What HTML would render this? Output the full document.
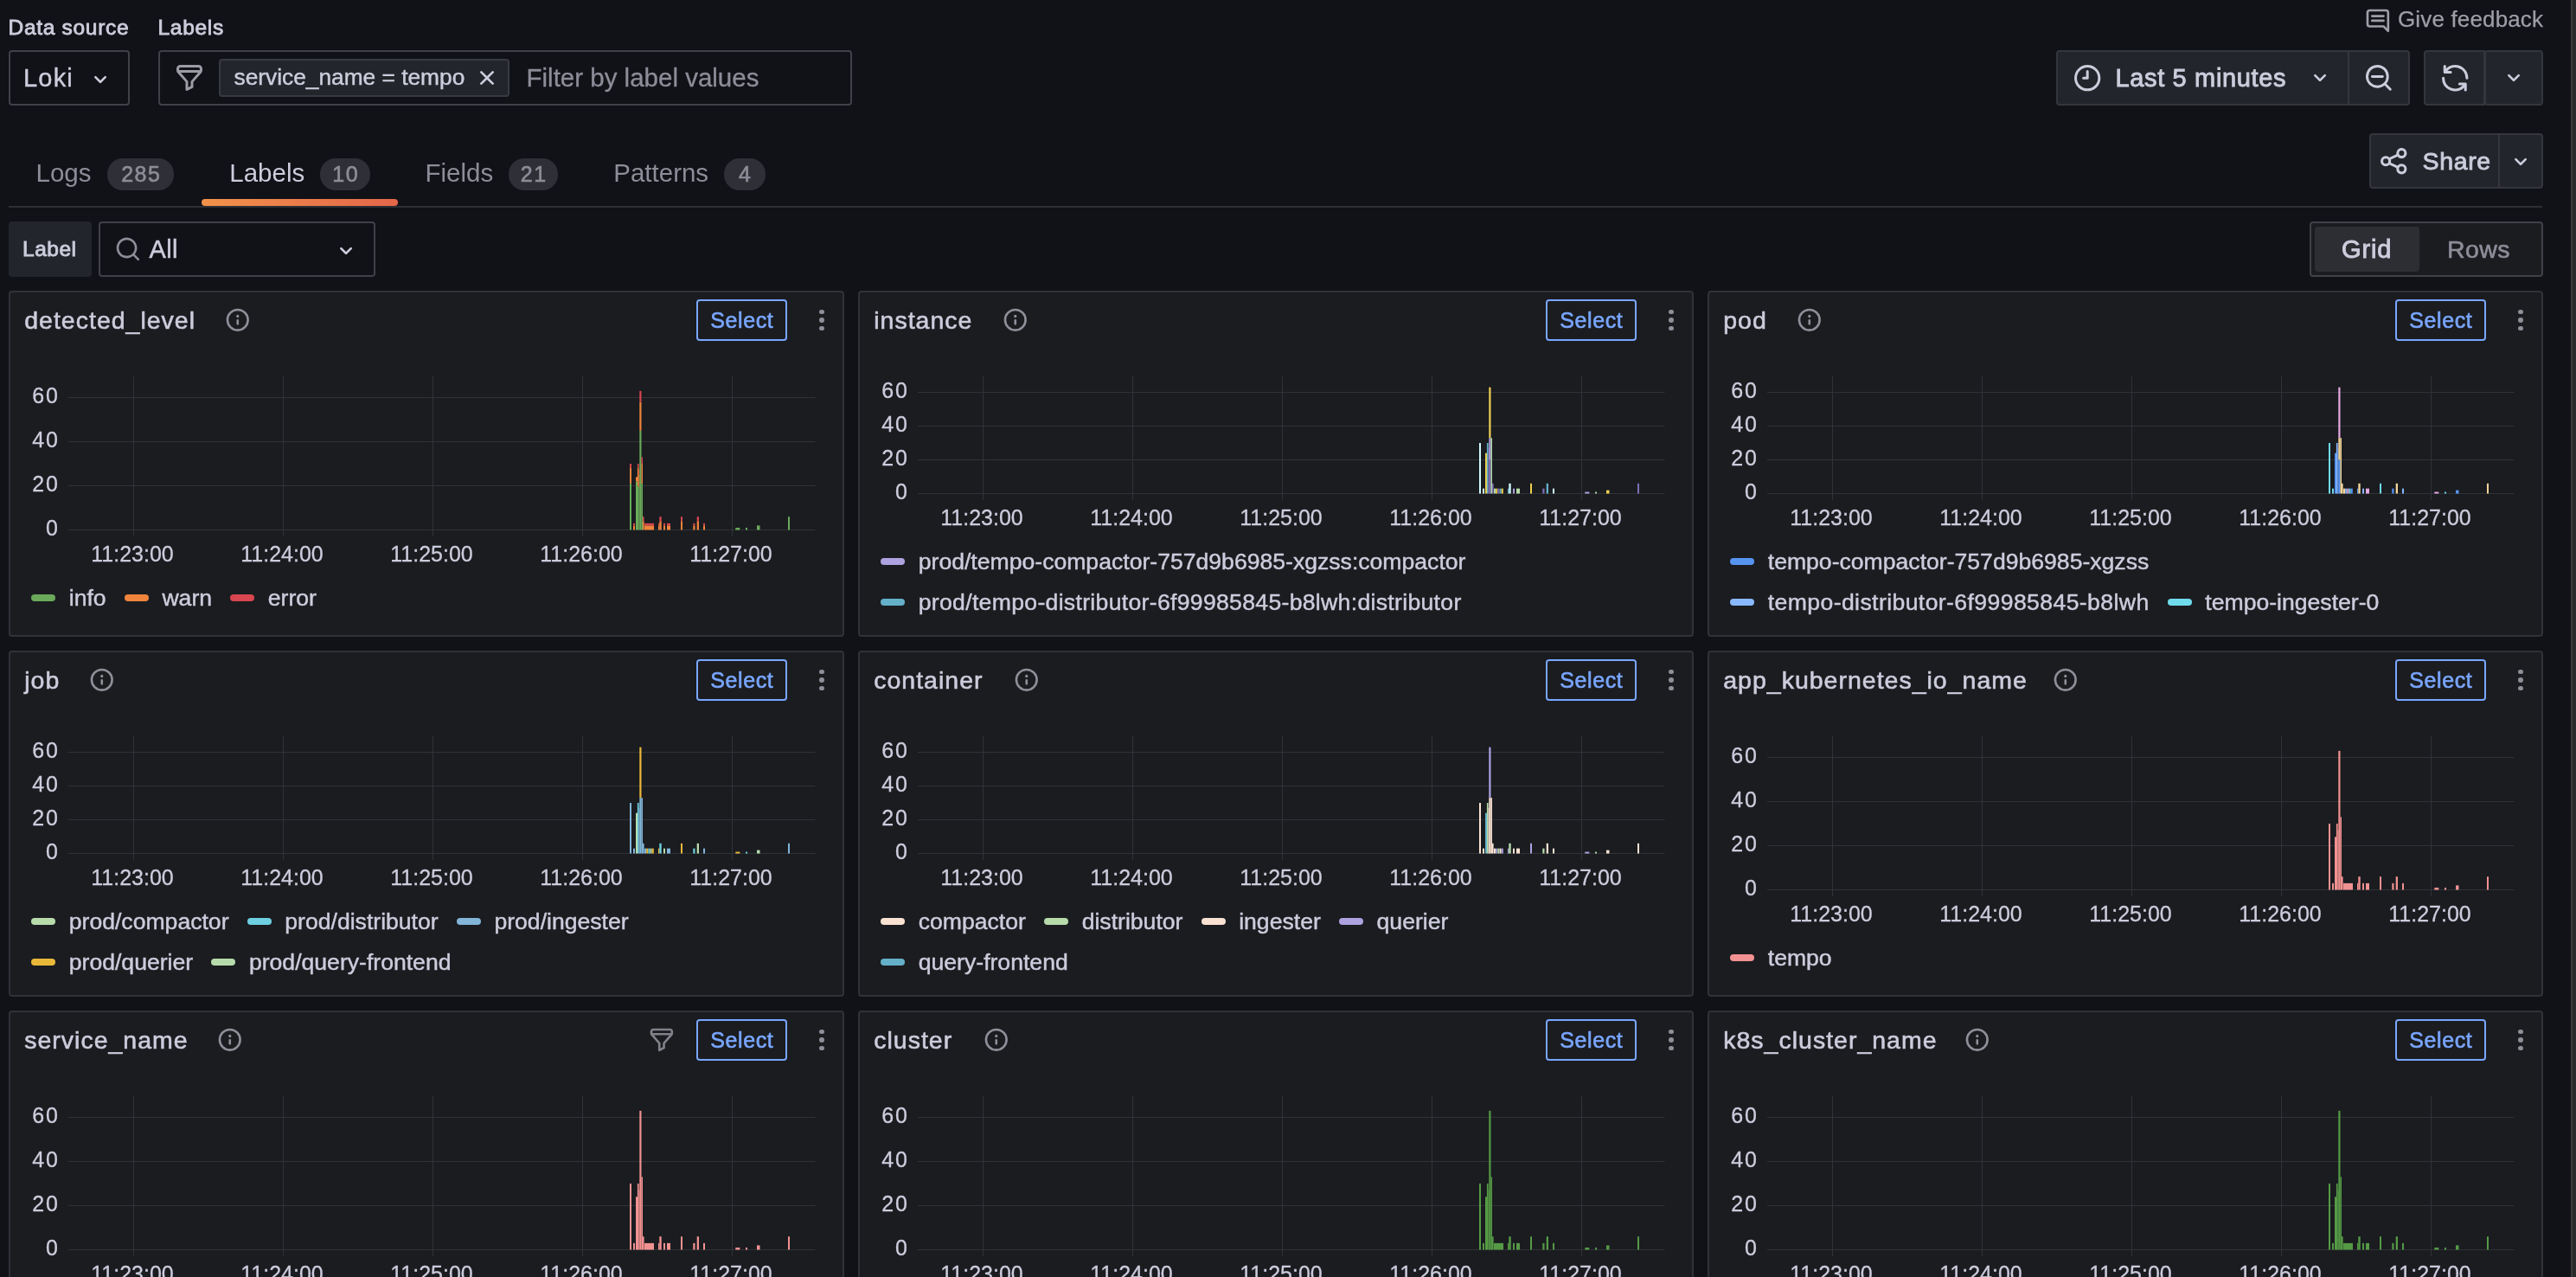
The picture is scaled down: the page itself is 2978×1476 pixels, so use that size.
<!DOCTYPE html>
<html><head><meta charset="utf-8"><title>Explore Logs</title>
<style>
html,body{margin:0;padding:0;background:#111217;width:2978px;height:1476px;overflow:hidden;}
body{position:relative;font-family:"Liberation Sans",sans-serif;}
.t{position:absolute;white-space:nowrap;line-height:normal;}
.b{position:absolute;box-sizing:border-box;}
.i{position:absolute;overflow:visible;}
.panel{position:absolute;box-sizing:border-box;background:#1a1c20;border:2px solid #313238;border-radius:4px;}
.legend{position:absolute;height:40px;display:flex;align-items:center;white-space:nowrap;font-size:26.6px;color:#ccccdc;}
.li{display:inline-flex;align-items:center;margin-right:21.25px;}
.sw{display:inline-block;width:28px;height:8px;border-radius:4px;margin-right:15.5px;}
.lt{line-height:40px;-webkit-text-stroke:0.45px #ccccdc;}
.scroll{position:absolute;left:2972px;top:0;width:6px;height:1476px;background:#2b2b2b;border-left:2px solid #3b3b3b;box-sizing:border-box;}
</style></head><body>
<div id="root" style="position:absolute;left:0;top:0;width:2978px;height:1476px;will-change:transform">
<div class="t " style="left:9.50px;top:17.82px;font-size:24.5px;font-weight:400;color:#ccccdc;letter-spacing:0.7px;-webkit-text-stroke:0.85px #ccccdc;">Data source</div><div class="t " style="left:182.50px;top:17.82px;font-size:24.5px;font-weight:400;color:#ccccdc;letter-spacing:0.7px;-webkit-text-stroke:0.85px #ccccdc;">Labels</div><div class="b" style="left:10px;top:58px;width:140px;height:64px;border-radius:4px;background:#111217;border:2px solid #404148;"></div><div class="t " style="left:27.00px;top:73.75px;font-size:29px;font-weight:400;color:#ccccdc;letter-spacing:1.2px;-webkit-text-stroke:0.4px #ccccdc;">Loki</div><svg class="i" style="left:99.75px;top:75.70px" width="32" height="32" viewBox="0 0 24 24"><path fill="#ccccdc" d="M17,9.17a1,1,0,0,0-1.41,0L12,12.71,8.46,9.17a1,1,0,0,0-1.41,0,1,1,0,0,0,0,1.42l4.24,4.24a1,1,0,0,0,1.42,0L17,10.59A1,1,0,0,0,17,9.17Z"/></svg><div class="b" style="left:183px;top:58px;width:802px;height:64px;border-radius:4px;background:#111217;border:2px solid #404148;"></div><svg class="i" style="left:200.80px;top:72.00px" width="36.0" height="36.0" viewBox="0 0 24 24"><path fill="#9b9ca6" d="M19,2H5A3,3,0,0,0,2,5V6.17a3,3,0,0,0,.17,1v0a3.1,3.1,0,0,0,.59,1L9,15.22V21a1,1,0,0,0,.47.85A1,1,0,0,0,10,22a1,1,0,0,0,.45-.11l4-2A1,1,0,0,0,15,19V15.22l6.25-7A3.1,3.1,0,0,0,21.82,7.2v0A3,3,0,0,0,22,6.17V5A3,3,0,0,0,19,2ZM13.26,14.32A1,1,0,0,0,13,15v3.38l-2,1V15a1,1,0,0,0-.26-.68L5.24,8H18.76ZM20,6H4V5A1,1,0,0,1,5,4H19a1,1,0,0,1,1,1Z"/></svg><div class="b" style="left:253px;top:68px;width:336px;height:44px;border-radius:4px;background:#22252b;border:2px solid #393a41;"></div><div class="t " style="left:270.50px;top:74.19px;font-size:26.3px;font-weight:400;color:#ccccdc;-webkit-text-stroke:0.45px #ccccdc;">service_name = tempo</div><svg class="i" style="left:547.00px;top:74.00px" width="32" height="32" viewBox="0 0 24 24"><path fill="#ccccdc" d="M13.41,12l4.3-4.29a1,1,0,1,0-1.42-1.42L12,10.59,7.71,6.29A1,1,0,0,0,6.29,7.71L10.59,12l-4.3,4.29a1,1,0,0,0,0,1.42,1,1,0,0,0,1.42,0L12,13.41l4.29,4.3a1,1,0,0,0,1.420,0,1,1,0,0,0,0-1.42Z"/></svg><div class="t " style="left:608.50px;top:73.29px;font-size:29.5px;font-weight:400;color:#8d8d99;-webkit-text-stroke:0.3px #8d8d99;">Filter by label values</div><svg class="i" style="left:2732.95px;top:7.85px" width="31.8" height="31.8" viewBox="0 0 24 24"><path fill="#9d9ea8" d="M17,7H7A1,1,0,0,0,7,9H17a1,1,0,0,0,0-2Zm0,4H7a1,1,0,0,0,0,2H17a1,1,0,0,0,0-2Zm2-9H5A3,3,0,0,0,2,5V15a3,3,0,0,0,3,3H16.59l3.7,3.71A1,1,0,0,0,21,22a.84.84,0,0,0,.38-.08A1,1,0,0,0,22,21V5A3,3,0,0,0,19,2Zm1,16.59-2.29-2.3A1,1,0,0,0,17,16H5a1,1,0,0,1-1-1V5A1,1,0,0,1,5,4H19a1,1,0,0,1,1,1Z"/></svg><div class="t " style="left:2772.00px;top:7.46px;font-size:26px;font-weight:400;color:#9d9ea8;letter-spacing:0.15px;-webkit-text-stroke:0.25px #9d9ea8;">Give feedback</div><div class="b" style="left:2377px;top:58px;width:409px;height:64px;border-radius:4px;background:#22252b;border:2px solid #34363c;"></div><div class="b" style="left:2714px;top:58px;width:2px;height:64px;background:#34363c"></div><svg class="i" style="left:2394.77px;top:71.57px" width="36.36" height="36.36" viewBox="0 0 24 24"><path fill="#ccccdc" d="M12,2A10,10,0,1,0,22,12,10.01114,10.01114,0,0,0,12,2Zm0,18a8,8,0,1,1,8-8A8.00917,8.00917,0,0,1,12,20Zm0-14a1,1,0,0,0-1,1v4H9a1,1,0,0,0,0,2h3a1,1,0,0,0,1-1V7A1,1,0,0,0,12,6Z"/></svg><div class="t " style="left:2445.50px;top:73.75px;font-size:29px;font-weight:400;color:#ccccdc;letter-spacing:0.65px;-webkit-text-stroke:0.9px #ccccdc;">Last 5 minutes</div><svg class="i" style="left:2665.80px;top:74.00px" width="32" height="32" viewBox="0 0 24 24"><path fill="#ccccdc" d="M17,9.17a1,1,0,0,0-1.41,0L12,12.71,8.46,9.17a1,1,0,0,0-1.41,0,1,1,0,0,0,0,1.42l4.24,4.24a1,1,0,0,0,1.42,0L17,10.59A1,1,0,0,0,17,9.17Z"/></svg><svg class="i" style="left:2732.02px;top:72.02px" width="35.76" height="35.76" viewBox="0 0 24 24"><path fill="#ccccdc" d="M21.71,20.29,18,16.61A9,9,0,1,0,16.61,18l3.68,3.68a1,1,0,0,0,1.42,0A1,1,0,0,0,21.71,20.29ZM11,18a7,7,0,1,1,7-7A7,7,0,0,1,11,18Zm4-8H7a1,1,0,0,0,0,2h8a1,1,0,0,0,0-2Z"/></svg><div class="b" style="left:2802px;top:58px;width:71px;height:64px;border-radius:4px;background:#22252b;border:2px solid #34363c;border-top-right-radius:0;border-bottom-right-radius:0;"></div><div class="b" style="left:2872px;top:58px;width:68px;height:64px;border-radius:4px;background:#22252b;border:2px solid #34363c;"></div><svg class="i" style="left:2819.66px;top:71.56px" width="36.48" height="36.48" viewBox="0 0 24 24"><path fill="#ccccdc" d="M19.91,15.51H15.38a1,1,0,0,0,0,2h2.4A8,8,0,0,1,4,12a1,1,0,0,0-2,0,10,10,0,0,0,16.88,7.23V21a1,1,0,0,0,2,0V16.5A1,1,0,0,0,19.910,15.51ZM12,2A10,10,0,0,0,5.12,4.77V3a1,1,0,0,0-2,0V7.5a1,1,0,0,0,1,1h4.5a1,1,0,0,0,0-2H6.22A8,8,0,0,1,20,12a1,1,0,0,0,2,0A10,10,0,0,0,12,2Z"/></svg><svg class="i" style="left:2889.80px;top:74.00px" width="32" height="32" viewBox="0 0 24 24"><path fill="#ccccdc" d="M17,9.17a1,1,0,0,0-1.41,0L12,12.71,8.46,9.17a1,1,0,0,0-1.41,0,1,1,0,0,0,0,1.42l4.24,4.24a1,1,0,0,0,1.42,0L17,10.59A1,1,0,0,0,17,9.17Z"/></svg><div class="t " style="left:41.50px;top:182.79px;font-size:29.5px;font-weight:400;color:#8d8d99;">Logs</div><div class="b" style="left:124px;top:183px;width:77px;height:36.5px;border-radius:18px;background:#2f3037;"></div><div class="t cnt" style="left:124px;top:183px;width:77px;height:36.5px;line-height:36.5px;font-size:25px;color:#8d8d99;text-align:center;letter-spacing:1.5px;text-indent:1.5px;-webkit-text-stroke:0.6px #8d8d99">285</div><div class="t " style="left:265.25px;top:182.79px;font-size:29.5px;font-weight:400;color:#ccccdc;">Labels</div><div class="b" style="left:370px;top:183px;width:58px;height:36.5px;border-radius:18px;background:#2f3037;"></div><div class="t cnt" style="left:370px;top:183px;width:58px;height:36.5px;line-height:36.5px;font-size:25px;color:#8d8d99;text-align:center;letter-spacing:1.5px;text-indent:1.5px;-webkit-text-stroke:0.6px #8d8d99">10</div><div class="t " style="left:491.50px;top:182.79px;font-size:29.5px;font-weight:400;color:#8d8d99;">Fields</div><div class="b" style="left:588px;top:183px;width:57px;height:36.5px;border-radius:18px;background:#2f3037;"></div><div class="t cnt" style="left:588px;top:183px;width:57px;height:36.5px;line-height:36.5px;font-size:25px;color:#8d8d99;text-align:center;letter-spacing:1.5px;text-indent:1.5px;-webkit-text-stroke:0.6px #8d8d99">21</div><div class="t " style="left:709.25px;top:182.79px;font-size:29.5px;font-weight:400;color:#8d8d99;">Patterns</div><div class="b" style="left:837px;top:183px;width:48px;height:36.5px;border-radius:18px;background:#2f3037;"></div><div class="t cnt" style="left:837px;top:183px;width:48px;height:36.5px;line-height:36.5px;font-size:25px;color:#8d8d99;text-align:center;letter-spacing:1.5px;text-indent:1.5px;-webkit-text-stroke:0.6px #8d8d99">4</div><div class="b" style="left:233px;top:230px;width:227px;height:8px;border-radius:4px;background:linear-gradient(90deg,#F2924A 0%,#E4664A 100%)"></div><div class="b" style="left:10px;top:238px;width:2929px;height:2px;background:#2d2f35"></div><div class="b" style="left:2739px;top:154px;width:201px;height:64px;border-radius:4px;background:#22252b;border:2px solid #34363c;"></div><div class="b" style="left:2888px;top:154px;width:2px;height:64px;background:#34363c"></div><svg class="i" style="left:2748.96px;top:167.56px" width="36.48" height="36.48" viewBox="0 0 24 24"><path fill="#ccccdc" d="M18,14a4,4,0,0,0-3.08,1.48l-5.1-2.35a3.64,3.64,0,0,0,0-2.26l5.1-2.35A4,4,0,1,0,14,6a4.17,4.17,0,0,0,.07.71L8.79,9.14a4,4,0,1,0,0,5.72l5.28,2.43A4.17,4.17,0,0,0,14,18a4,4,0,1,0,4-4ZM18,4a2,2,0,1,1-2,2A2,2,0,0,1,18,4ZM6,14a2,2,0,1,1,2-2A2,2,0,0,1,6,14Zm12,6a2,2,0,1,1,2-2A2,2,0,0,1,18,20Z"/></svg><div class="t " style="left:2800.50px;top:170.20px;font-size:28.5px;font-weight:400;color:#ccccdc;letter-spacing:0.65px;-webkit-text-stroke:0.9px #ccccdc;">Share</div><svg class="i" style="left:2897.80px;top:170.50px" width="32" height="32" viewBox="0 0 24 24"><path fill="#ccccdc" d="M17,9.17a1,1,0,0,0-1.41,0L12,12.71,8.46,9.17a1,1,0,0,0-1.41,0,1,1,0,0,0,0,1.42l4.24,4.24a1,1,0,0,0,1.42,0L17,10.59A1,1,0,0,0,17,9.17Z"/></svg><div class="b" style="left:10px;top:256px;width:96px;height:64px;border-radius:4px;background:#22252b;"></div><div class="t " style="left:26.00px;top:274.07px;font-size:24.5px;font-weight:400;color:#ccccdc;letter-spacing:0.5px;-webkit-text-stroke:0.9px #ccccdc;">Label</div><div class="b" style="left:114px;top:256px;width:320px;height:64px;border-radius:4px;background:#111217;border:2px solid #404148;"></div><svg class="i" style="left:132.35px;top:272.35px" width="31.8" height="31.8" viewBox="0 0 24 24"><path fill="#8d8d99" d="M21.71,20.29,18,16.61A9,9,0,1,0,16.61,18l3.68,3.68a1,1,0,0,0,1.42,0A1,1,0,0,0,21.71,20.29ZM11,18a7,7,0,1,1,7-7A7,7,0,0,1,11,18Z"/></svg><div class="t " style="left:172.50px;top:271.75px;font-size:29px;font-weight:400;color:#ccccdc;letter-spacing:0.4px;-webkit-text-stroke:0.5px #ccccdc;">All</div><svg class="i" style="left:384.00px;top:274.00px" width="32" height="32" viewBox="0 0 24 24"><path fill="#ccccdc" d="M17,9.17a1,1,0,0,0-1.41,0L12,12.71,8.46,9.17a1,1,0,0,0-1.41,0,1,1,0,0,0,0,1.42l4.24,4.24a1,1,0,0,0,1.42,0L17,10.59A1,1,0,0,0,17,9.17Z"/></svg><div class="b" style="left:2670px;top:256px;width:270px;height:64px;border-radius:4px;background:#1a1c20;border:2px solid #404148;"></div><div class="b" style="left:2676px;top:262px;width:121px;height:52px;border-radius:4px;background:#2d2e34;"></div><div class="t " style="left:2707.00px;top:271.75px;font-size:29px;font-weight:400;color:#ccccdc;letter-spacing:0.85px;-webkit-text-stroke:0.9px #ccccdc;">Grid</div><div class="t " style="left:2829.00px;top:272.20px;font-size:28.5px;font-weight:400;color:#8d8d99;letter-spacing:0.4px;-webkit-text-stroke:0.6px #8d8d99;">Rows</div><div class="panel" style="left:10px;top:336px;width:966px;height:400px"></div><div class="t " style="left:28.25px;top:354.20px;font-size:28.5px;font-weight:400;color:#ccccdc;letter-spacing:1.0px;-webkit-text-stroke:0.6px #ccccdc;">detected_level</div><svg class="i" style="left:259.37px;top:354.37px" width="31.56" height="31.56" viewBox="0 0 24 24"><path fill="#8e8f99" d="M12,2A10,10,0,1,0,22,12,10,10,0,0,0,12,2Zm0,18a8,8,0,1,1,8-8A8,8,0,0,1,12,20Zm0-8.5a1,1,0,0,0-1,1v3a1,1,0,0,0,2,0v-3A1,1,0,0,0,12,11.5Zm0-4a1.25,1.25,0,1,0,1.25,1.25A1.25,1.25,0,0,0,12,7.5Z"/></svg><div class="b" style="left:805px;top:346px;width:105px;height:48px;border-radius:4px;border:2px solid #79a6ff;"></div><div class="t" style="left:805px;top:346px;width:105px;height:48px;line-height:48px;text-align:center;font-size:25px;color:#79a6ff;letter-spacing:0.6px;text-indent:0.6px;-webkit-text-stroke:0.6px #79a6ff">Select</div><div class="b" style="left:947.10px;top:357.60px;width:5.8px;height:5.8px;border-radius:50%;background:#8e8f99"></div><div class="b" style="left:947.10px;top:367.10px;width:5.8px;height:5.8px;border-radius:50%;background:#8e8f99"></div><div class="b" style="left:947.10px;top:376.60px;width:5.8px;height:5.8px;border-radius:50%;background:#8e8f99"></div><svg class="i" style="left:0;top:0" width="2978" height="1476"><rect x="79" y="459.0" width="863.5" height="1" fill="#303237"/><rect x="79" y="510.0" width="863.5" height="1" fill="#303237"/><rect x="79" y="561.0" width="863.5" height="1" fill="#303237"/><rect x="79" y="612.0" width="863.5" height="1" fill="#303237"/><rect x="154" y="434.5" width="1" height="185.5" fill="#303237"/><rect x="327" y="434.5" width="1" height="185.5" fill="#303237"/><rect x="500" y="434.5" width="1" height="185.5" fill="#303237"/><rect x="673" y="434.5" width="1" height="185.5" fill="#303237"/><rect x="846" y="434.5" width="1" height="185.5" fill="#303237"/><rect x="728.00" y="558.95" width="2.00" height="53.55" fill="#6aaa5a"/><rect x="728.00" y="541.10" width="2.00" height="17.85" fill="#EF843C"/><rect x="728.00" y="536.00" width="2.00" height="5.10" fill="#D8464F"/><rect x="732.00" y="607.40" width="2.00" height="5.10" fill="#EF843C"/><rect x="732.00" y="604.85" width="2.00" height="2.55" fill="#D8464F"/><rect x="735.00" y="556.40" width="2.00" height="56.10" fill="#6aaa5a"/><rect x="735.00" y="551.30" width="2.00" height="5.10" fill="#EF843C"/><rect x="736.90" y="561.50" width="1.70" height="51.00" fill="#6aaa5a"/><rect x="736.90" y="541.10" width="1.70" height="20.40" fill="#EF843C"/><rect x="736.90" y="536.00" width="1.70" height="5.10" fill="#D8464F"/><rect x="738.60" y="564.05" width="0.90" height="48.45" fill="#6aaa5a"/><rect x="738.60" y="548.75" width="0.90" height="15.30" fill="#EF843C"/><rect x="738.60" y="543.65" width="0.90" height="5.10" fill="#D8464F"/><rect x="739.30" y="497.75" width="2.20" height="114.75" fill="#6aaa5a"/><rect x="739.30" y="464.60" width="2.20" height="33.15" fill="#EF843C"/><rect x="739.30" y="451.85" width="2.20" height="12.75" fill="#D8464F"/><rect x="741.50" y="558.95" width="1.50" height="53.55" fill="#6aaa5a"/><rect x="741.50" y="536.00" width="1.50" height="22.95" fill="#EF843C"/><rect x="741.50" y="528.35" width="1.50" height="7.65" fill="#D8464F"/><rect x="743.00" y="602.30" width="1.60" height="10.20" fill="#EF843C"/><rect x="743.00" y="597.20" width="1.60" height="5.10" fill="#D8464F"/><rect x="745.00" y="607.40" width="11.00" height="5.10" fill="#EF843C"/><rect x="745.00" y="604.85" width="11.00" height="2.55" fill="#D8464F"/><rect x="761.00" y="607.40" width="1.30" height="5.10" fill="#EF843C"/><rect x="761.00" y="604.85" width="1.30" height="2.55" fill="#D8464F"/><rect x="762.30" y="602.30" width="2.40" height="10.20" fill="#EF843C"/><rect x="762.30" y="597.20" width="2.40" height="5.10" fill="#D8464F"/><rect x="767.00" y="607.40" width="2.00" height="5.10" fill="#EF843C"/><rect x="767.00" y="604.85" width="2.00" height="2.55" fill="#D8464F"/><rect x="771.00" y="607.40" width="4.00" height="5.10" fill="#EF843C"/><rect x="771.00" y="604.85" width="4.00" height="2.55" fill="#D8464F"/><rect x="787.00" y="602.30" width="2.00" height="10.20" fill="#EF843C"/><rect x="787.00" y="597.20" width="2.00" height="5.10" fill="#D8464F"/><rect x="801.30" y="607.40" width="2.20" height="5.10" fill="#EF843C"/><rect x="801.30" y="604.85" width="2.20" height="2.55" fill="#D8464F"/><rect x="805.70" y="602.30" width="2.30" height="10.20" fill="#EF843C"/><rect x="805.70" y="597.20" width="2.30" height="5.10" fill="#D8464F"/><rect x="813.00" y="607.40" width="2.00" height="5.10" fill="#EF843C"/><rect x="813.00" y="604.85" width="2.00" height="2.55" fill="#D8464F"/><rect x="850.30" y="609.95" width="5.00" height="2.55" fill="#6aaa5a"/><rect x="862.00" y="609.95" width="2.00" height="2.55" fill="#6aaa5a"/><rect x="875.00" y="607.40" width="3.50" height="5.10" fill="#6aaa5a"/><rect x="911.00" y="597.20" width="2.00" height="15.30" fill="#6aaa5a"/></svg><div class="t" style="left:26px;top:442.62px;width:43px;text-align:right;font-size:25px;letter-spacing:2px;color:#ccccdc;-webkit-text-stroke:0.3px #ccccdc">60</div><div class="t" style="left:26px;top:493.62px;width:43px;text-align:right;font-size:25px;letter-spacing:2px;color:#ccccdc;-webkit-text-stroke:0.3px #ccccdc">40</div><div class="t" style="left:26px;top:544.62px;width:43px;text-align:right;font-size:25px;letter-spacing:2px;color:#ccccdc;-webkit-text-stroke:0.3px #ccccdc">20</div><div class="t" style="left:26px;top:595.62px;width:43px;text-align:right;font-size:25px;letter-spacing:2px;color:#ccccdc;-webkit-text-stroke:0.3px #ccccdc">0</div><div class="t" style="left:93px;top:626.12px;width:120px;text-align:center;font-size:25px;color:#ccccdc;-webkit-text-stroke:0.3px #ccccdc">11:23:00</div><div class="t" style="left:266px;top:626.12px;width:120px;text-align:center;font-size:25px;color:#ccccdc;-webkit-text-stroke:0.3px #ccccdc">11:24:00</div><div class="t" style="left:439px;top:626.12px;width:120px;text-align:center;font-size:25px;color:#ccccdc;-webkit-text-stroke:0.3px #ccccdc">11:25:00</div><div class="t" style="left:612px;top:626.12px;width:120px;text-align:center;font-size:25px;color:#ccccdc;-webkit-text-stroke:0.3px #ccccdc">11:26:00</div><div class="t" style="left:785px;top:626.12px;width:120px;text-align:center;font-size:25px;color:#ccccdc;-webkit-text-stroke:0.3px #ccccdc">11:27:00</div><div class="legend" style="left:36.25px;top:671.00px"><span class="li"><span class="sw" style="background:#6aaa5a"></span><span class="lt" style="letter-spacing:0px">info</span></span><span class="li"><span class="sw" style="background:#EF843C"></span><span class="lt" style="letter-spacing:0px">warn</span></span><span class="li"><span class="sw" style="background:#D8464F"></span><span class="lt" style="letter-spacing:0px">error</span></span></div><div class="panel" style="left:992px;top:336px;width:966px;height:400px"></div><div class="t " style="left:1010.25px;top:354.20px;font-size:28.5px;font-weight:400;color:#ccccdc;letter-spacing:1.0px;-webkit-text-stroke:0.6px #ccccdc;">instance</div><svg class="i" style="left:1158.12px;top:354.37px" width="31.56" height="31.56" viewBox="0 0 24 24"><path fill="#8e8f99" d="M12,2A10,10,0,1,0,22,12,10,10,0,0,0,12,2Zm0,18a8,8,0,1,1,8-8A8,8,0,0,1,12,20Zm0-8.5a1,1,0,0,0-1,1v3a1,1,0,0,0,2,0v-3A1,1,0,0,0,12,11.5Zm0-4a1.25,1.25,0,1,0,1.25,1.25A1.25,1.25,0,0,0,12,7.5Z"/></svg><div class="b" style="left:1787px;top:346px;width:105px;height:48px;border-radius:4px;border:2px solid #79a6ff;"></div><div class="t" style="left:1787px;top:346px;width:105px;height:48px;line-height:48px;text-align:center;font-size:25px;color:#79a6ff;letter-spacing:0.6px;text-indent:0.6px;-webkit-text-stroke:0.6px #79a6ff">Select</div><div class="b" style="left:1929.10px;top:357.60px;width:5.8px;height:5.8px;border-radius:50%;background:#8e8f99"></div><div class="b" style="left:1929.10px;top:367.10px;width:5.8px;height:5.8px;border-radius:50%;background:#8e8f99"></div><div class="b" style="left:1929.10px;top:376.60px;width:5.8px;height:5.8px;border-radius:50%;background:#8e8f99"></div><svg class="i" style="left:0;top:0" width="2978" height="1476"><rect x="1061" y="453.0" width="863.5" height="1" fill="#303237"/><rect x="1061" y="492.0" width="863.5" height="1" fill="#303237"/><rect x="1061" y="531.0" width="863.5" height="1" fill="#303237"/><rect x="1061" y="570.0" width="863.5" height="1" fill="#303237"/><rect x="1136" y="434.5" width="1" height="143.5" fill="#303237"/><rect x="1309" y="434.5" width="1" height="143.5" fill="#303237"/><rect x="1482" y="434.5" width="1" height="143.5" fill="#303237"/><rect x="1655" y="434.5" width="1" height="143.5" fill="#303237"/><rect x="1828" y="434.5" width="1" height="143.5" fill="#303237"/><rect x="1710.00" y="512.00" width="2.00" height="58.50" fill="#CFFAFF"/><rect x="1714.00" y="564.65" width="2.00" height="5.85" fill="#CFFAFF"/><rect x="1717.00" y="523.70" width="2.00" height="46.80" fill="#EDD050"/><rect x="1718.90" y="512.00" width="1.70" height="58.50" fill="#64B0C8"/><rect x="1720.60" y="517.85" width="0.90" height="52.65" fill="#806EB7"/><rect x="1721.30" y="531.50" width="2.20" height="39.00" fill="#806EB7"/><rect x="1721.30" y="506.15" width="2.20" height="25.35" fill="#AEA2E0"/><rect x="1721.30" y="447.65" width="2.20" height="58.50" fill="#EDD050"/><rect x="1723.50" y="506.15" width="1.50" height="64.35" fill="#B7DBAB"/><rect x="1725.00" y="558.80" width="1.60" height="11.70" fill="#806EB7"/><rect x="1727.00" y="564.65" width="2" height="5.85" fill="#B7DBAB"/><rect x="1729.20" y="564.65" width="2" height="5.85" fill="#EDD050"/><rect x="1731.40" y="564.65" width="2" height="5.85" fill="#806EB7"/><rect x="1733.60" y="564.65" width="2" height="5.85" fill="#64B0C8"/><rect x="1735.80" y="564.65" width="2" height="5.85" fill="#EDD050"/><rect x="1743.00" y="564.65" width="1.30" height="5.85" fill="#64B0C8"/><rect x="1744.30" y="558.80" width="2.40" height="11.70" fill="#CFFAFF"/><rect x="1749.00" y="564.65" width="2.00" height="5.85" fill="#AEA2E0"/><rect x="1753.00" y="564.65" width="4.00" height="5.85" fill="#B7DBAB"/><rect x="1769.00" y="558.80" width="2.00" height="11.70" fill="#EDD050"/><rect x="1783.30" y="564.65" width="2.20" height="5.85" fill="#806EB7"/><rect x="1787.70" y="558.80" width="2.30" height="11.70" fill="#64B0C8"/><rect x="1795.00" y="564.65" width="2.00" height="5.85" fill="#CFFAFF"/><rect x="1832.30" y="568.55" width="5.00" height="1.95" fill="#AEA2E0"/><rect x="1844.00" y="568.55" width="2.00" height="1.95" fill="#B7DBAB"/><rect x="1857.00" y="566.60" width="3.50" height="3.90" fill="#EDD050"/><rect x="1893.00" y="558.80" width="2.00" height="11.70" fill="#806EB7"/></svg><div class="t" style="left:1008px;top:436.62px;width:43px;text-align:right;font-size:25px;letter-spacing:2px;color:#ccccdc;-webkit-text-stroke:0.3px #ccccdc">60</div><div class="t" style="left:1008px;top:475.62px;width:43px;text-align:right;font-size:25px;letter-spacing:2px;color:#ccccdc;-webkit-text-stroke:0.3px #ccccdc">40</div><div class="t" style="left:1008px;top:514.62px;width:43px;text-align:right;font-size:25px;letter-spacing:2px;color:#ccccdc;-webkit-text-stroke:0.3px #ccccdc">20</div><div class="t" style="left:1008px;top:553.62px;width:43px;text-align:right;font-size:25px;letter-spacing:2px;color:#ccccdc;-webkit-text-stroke:0.3px #ccccdc">0</div><div class="t" style="left:1075px;top:584.37px;width:120px;text-align:center;font-size:25px;color:#ccccdc;-webkit-text-stroke:0.3px #ccccdc">11:23:00</div><div class="t" style="left:1248px;top:584.37px;width:120px;text-align:center;font-size:25px;color:#ccccdc;-webkit-text-stroke:0.3px #ccccdc">11:24:00</div><div class="t" style="left:1421px;top:584.37px;width:120px;text-align:center;font-size:25px;color:#ccccdc;-webkit-text-stroke:0.3px #ccccdc">11:25:00</div><div class="t" style="left:1594px;top:584.37px;width:120px;text-align:center;font-size:25px;color:#ccccdc;-webkit-text-stroke:0.3px #ccccdc">11:26:00</div><div class="t" style="left:1767px;top:584.37px;width:120px;text-align:center;font-size:25px;color:#ccccdc;-webkit-text-stroke:0.3px #ccccdc">11:27:00</div><div class="legend" style="left:1018.25px;top:629.00px"><span class="li"><span class="sw" style="background:#AEA2E0"></span><span class="lt" style="letter-spacing:0px">prod/tempo-compactor-757d9b6985-xgzss:compactor</span></span></div><div class="legend" style="left:1018.25px;top:676.00px"><span class="li"><span class="sw" style="background:#64B0C8"></span><span class="lt" style="letter-spacing:0.31px">prod/tempo-distributor-6f99985845-b8lwh:distributor</span></span></div><div class="panel" style="left:1974px;top:336px;width:966px;height:400px"></div><div class="t " style="left:1992.25px;top:354.20px;font-size:28.5px;font-weight:400;color:#ccccdc;letter-spacing:1.0px;-webkit-text-stroke:0.6px #ccccdc;">pod</div><svg class="i" style="left:2076.12px;top:354.37px" width="31.56" height="31.56" viewBox="0 0 24 24"><path fill="#8e8f99" d="M12,2A10,10,0,1,0,22,12,10,10,0,0,0,12,2Zm0,18a8,8,0,1,1,8-8A8,8,0,0,1,12,20Zm0-8.5a1,1,0,0,0-1,1v3a1,1,0,0,0,2,0v-3A1,1,0,0,0,12,11.5Zm0-4a1.25,1.25,0,1,0,1.25,1.25A1.25,1.25,0,0,0,12,7.5Z"/></svg><div class="b" style="left:2769px;top:346px;width:105px;height:48px;border-radius:4px;border:2px solid #79a6ff;"></div><div class="t" style="left:2769px;top:346px;width:105px;height:48px;line-height:48px;text-align:center;font-size:25px;color:#79a6ff;letter-spacing:0.6px;text-indent:0.6px;-webkit-text-stroke:0.6px #79a6ff">Select</div><div class="b" style="left:2911.10px;top:357.60px;width:5.8px;height:5.8px;border-radius:50%;background:#8e8f99"></div><div class="b" style="left:2911.10px;top:367.10px;width:5.8px;height:5.8px;border-radius:50%;background:#8e8f99"></div><div class="b" style="left:2911.10px;top:376.60px;width:5.8px;height:5.8px;border-radius:50%;background:#8e8f99"></div><svg class="i" style="left:0;top:0" width="2978" height="1476"><rect x="2043" y="453.0" width="863.5" height="1" fill="#303237"/><rect x="2043" y="492.0" width="863.5" height="1" fill="#303237"/><rect x="2043" y="531.0" width="863.5" height="1" fill="#303237"/><rect x="2043" y="570.0" width="863.5" height="1" fill="#303237"/><rect x="2118" y="434.5" width="1" height="143.5" fill="#303237"/><rect x="2291" y="434.5" width="1" height="143.5" fill="#303237"/><rect x="2464" y="434.5" width="1" height="143.5" fill="#303237"/><rect x="2637" y="434.5" width="1" height="143.5" fill="#303237"/><rect x="2810" y="434.5" width="1" height="143.5" fill="#303237"/><rect x="2692.00" y="512.00" width="2.00" height="58.50" fill="#70DBED"/><rect x="2696.00" y="564.65" width="2.00" height="5.85" fill="#70DBED"/><rect x="2699.00" y="523.70" width="2.00" height="46.80" fill="#5794F2"/><rect x="2700.90" y="512.00" width="1.70" height="58.50" fill="#8AB8FF"/><rect x="2702.60" y="517.85" width="0.90" height="52.65" fill="#5794F2"/><rect x="2703.30" y="531.50" width="2.20" height="39.00" fill="#5794F2"/><rect x="2703.30" y="506.15" width="2.20" height="25.35" fill="#F4D598"/><rect x="2703.30" y="447.65" width="2.20" height="58.50" fill="#E5A8E2"/><rect x="2705.50" y="506.15" width="1.50" height="64.35" fill="#F4D598"/><rect x="2707.00" y="558.80" width="1.60" height="11.70" fill="#F4D598"/><rect x="2709.00" y="564.65" width="2" height="5.85" fill="#F4D598"/><rect x="2711.20" y="564.65" width="2" height="5.85" fill="#8AB8FF"/><rect x="2713.40" y="564.65" width="2" height="5.85" fill="#E5A8E2"/><rect x="2715.60" y="564.65" width="2" height="5.85" fill="#70DBED"/><rect x="2717.80" y="564.65" width="2" height="5.85" fill="#5794F2"/><rect x="2725.00" y="564.65" width="1.30" height="5.85" fill="#5794F2"/><rect x="2726.30" y="558.80" width="2.40" height="11.70" fill="#F4D598"/><rect x="2731.00" y="564.65" width="2.00" height="5.85" fill="#8AB8FF"/><rect x="2735.00" y="564.65" width="4.00" height="5.85" fill="#E5A8E2"/><rect x="2751.00" y="558.80" width="2.00" height="11.70" fill="#70DBED"/><rect x="2765.30" y="564.65" width="2.20" height="5.85" fill="#5794F2"/><rect x="2769.70" y="558.80" width="2.30" height="11.70" fill="#F4D598"/><rect x="2777.00" y="564.65" width="2.00" height="5.85" fill="#8AB8FF"/><rect x="2814.30" y="568.55" width="5.00" height="1.95" fill="#E5A8E2"/><rect x="2826.00" y="568.55" width="2.00" height="1.95" fill="#70DBED"/><rect x="2839.00" y="566.60" width="3.50" height="3.90" fill="#5794F2"/><rect x="2875.00" y="558.80" width="2.00" height="11.70" fill="#F4D598"/></svg><div class="t" style="left:1990px;top:436.62px;width:43px;text-align:right;font-size:25px;letter-spacing:2px;color:#ccccdc;-webkit-text-stroke:0.3px #ccccdc">60</div><div class="t" style="left:1990px;top:475.62px;width:43px;text-align:right;font-size:25px;letter-spacing:2px;color:#ccccdc;-webkit-text-stroke:0.3px #ccccdc">40</div><div class="t" style="left:1990px;top:514.62px;width:43px;text-align:right;font-size:25px;letter-spacing:2px;color:#ccccdc;-webkit-text-stroke:0.3px #ccccdc">20</div><div class="t" style="left:1990px;top:553.62px;width:43px;text-align:right;font-size:25px;letter-spacing:2px;color:#ccccdc;-webkit-text-stroke:0.3px #ccccdc">0</div><div class="t" style="left:2057px;top:584.37px;width:120px;text-align:center;font-size:25px;color:#ccccdc;-webkit-text-stroke:0.3px #ccccdc">11:23:00</div><div class="t" style="left:2230px;top:584.37px;width:120px;text-align:center;font-size:25px;color:#ccccdc;-webkit-text-stroke:0.3px #ccccdc">11:24:00</div><div class="t" style="left:2403px;top:584.37px;width:120px;text-align:center;font-size:25px;color:#ccccdc;-webkit-text-stroke:0.3px #ccccdc">11:25:00</div><div class="t" style="left:2576px;top:584.37px;width:120px;text-align:center;font-size:25px;color:#ccccdc;-webkit-text-stroke:0.3px #ccccdc">11:26:00</div><div class="t" style="left:2749px;top:584.37px;width:120px;text-align:center;font-size:25px;color:#ccccdc;-webkit-text-stroke:0.3px #ccccdc">11:27:00</div><div class="legend" style="left:2000.25px;top:629.00px"><span class="li"><span class="sw" style="background:#5794F2"></span><span class="lt" style="letter-spacing:0px">tempo-compactor-757d9b6985-xgzss</span></span></div><div class="legend" style="left:2000.25px;top:676.00px"><span class="li"><span class="sw" style="background:#8AB8FF"></span><span class="lt" style="letter-spacing:0.4px">tempo-distributor-6f99985845-b8lwh</span></span><span class="li"><span class="sw" style="background:#70DBED"></span><span class="lt" style="letter-spacing:0px">tempo-ingester-0</span></span></div><div class="panel" style="left:10px;top:752px;width:966px;height:400px"></div><div class="t " style="left:28.25px;top:770.20px;font-size:28.5px;font-weight:400;color:#ccccdc;letter-spacing:1.0px;-webkit-text-stroke:0.6px #ccccdc;">job</div><svg class="i" style="left:102.37px;top:770.37px" width="31.56" height="31.56" viewBox="0 0 24 24"><path fill="#8e8f99" d="M12,2A10,10,0,1,0,22,12,10,10,0,0,0,12,2Zm0,18a8,8,0,1,1,8-8A8,8,0,0,1,12,20Zm0-8.5a1,1,0,0,0-1,1v3a1,1,0,0,0,2,0v-3A1,1,0,0,0,12,11.5Zm0-4a1.25,1.25,0,1,0,1.25,1.25A1.25,1.25,0,0,0,12,7.5Z"/></svg><div class="b" style="left:805px;top:762px;width:105px;height:48px;border-radius:4px;border:2px solid #79a6ff;"></div><div class="t" style="left:805px;top:762px;width:105px;height:48px;line-height:48px;text-align:center;font-size:25px;color:#79a6ff;letter-spacing:0.6px;text-indent:0.6px;-webkit-text-stroke:0.6px #79a6ff">Select</div><div class="b" style="left:947.10px;top:773.60px;width:5.8px;height:5.8px;border-radius:50%;background:#8e8f99"></div><div class="b" style="left:947.10px;top:783.10px;width:5.8px;height:5.8px;border-radius:50%;background:#8e8f99"></div><div class="b" style="left:947.10px;top:792.60px;width:5.8px;height:5.8px;border-radius:50%;background:#8e8f99"></div><svg class="i" style="left:0;top:0" width="2978" height="1476"><rect x="79" y="869.0" width="863.5" height="1" fill="#303237"/><rect x="79" y="908.0" width="863.5" height="1" fill="#303237"/><rect x="79" y="947.0" width="863.5" height="1" fill="#303237"/><rect x="79" y="986.0" width="863.5" height="1" fill="#303237"/><rect x="154" y="850.5" width="1" height="143.5" fill="#303237"/><rect x="327" y="850.5" width="1" height="143.5" fill="#303237"/><rect x="500" y="850.5" width="1" height="143.5" fill="#303237"/><rect x="673" y="850.5" width="1" height="143.5" fill="#303237"/><rect x="846" y="850.5" width="1" height="143.5" fill="#303237"/><rect x="728.00" y="928.00" width="2.00" height="58.50" fill="#82B5D8"/><rect x="732.00" y="980.65" width="2.00" height="5.85" fill="#82B5D8"/><rect x="735.00" y="939.70" width="2.00" height="46.80" fill="#B7DBAB"/><rect x="736.90" y="928.00" width="1.70" height="58.50" fill="#6ED0E0"/><rect x="738.60" y="933.85" width="0.90" height="52.65" fill="#82B5D8"/><rect x="739.30" y="922.15" width="2.20" height="64.35" fill="#82B5D8"/><rect x="739.30" y="863.65" width="2.20" height="58.50" fill="#EAB839"/><rect x="741.50" y="922.15" width="1.50" height="64.35" fill="#82B5D8"/><rect x="743.00" y="974.80" width="1.60" height="11.70" fill="#82B5D8"/><rect x="745.00" y="980.65" width="2" height="5.85" fill="#82B5D8"/><rect x="747.20" y="980.65" width="2" height="5.85" fill="#EAB839"/><rect x="749.40" y="980.65" width="2" height="5.85" fill="#6ED0E0"/><rect x="751.60" y="980.65" width="2" height="5.85" fill="#B7DBAB"/><rect x="753.80" y="980.65" width="2" height="5.85" fill="#EAB839"/><rect x="761.00" y="980.65" width="1.30" height="5.85" fill="#EAB839"/><rect x="762.30" y="974.80" width="2.40" height="11.70" fill="#6ED0E0"/><rect x="767.00" y="980.65" width="2.00" height="5.85" fill="#B7DBAB"/><rect x="771.00" y="980.65" width="4.00" height="5.85" fill="#82B5D8"/><rect x="787.00" y="974.80" width="2.00" height="11.70" fill="#EAB839"/><rect x="801.30" y="980.65" width="2.20" height="5.85" fill="#6ED0E0"/><rect x="805.70" y="974.80" width="2.30" height="11.70" fill="#B7DBAB"/><rect x="813.00" y="980.65" width="2.00" height="5.85" fill="#82B5D8"/><rect x="850.30" y="984.55" width="5.00" height="1.95" fill="#EAB839"/><rect x="862.00" y="984.55" width="2.00" height="1.95" fill="#6ED0E0"/><rect x="875.00" y="982.60" width="3.50" height="3.90" fill="#B7DBAB"/><rect x="911.00" y="974.80" width="2.00" height="11.70" fill="#82B5D8"/></svg><div class="t" style="left:26px;top:852.62px;width:43px;text-align:right;font-size:25px;letter-spacing:2px;color:#ccccdc;-webkit-text-stroke:0.3px #ccccdc">60</div><div class="t" style="left:26px;top:891.62px;width:43px;text-align:right;font-size:25px;letter-spacing:2px;color:#ccccdc;-webkit-text-stroke:0.3px #ccccdc">40</div><div class="t" style="left:26px;top:930.62px;width:43px;text-align:right;font-size:25px;letter-spacing:2px;color:#ccccdc;-webkit-text-stroke:0.3px #ccccdc">20</div><div class="t" style="left:26px;top:969.62px;width:43px;text-align:right;font-size:25px;letter-spacing:2px;color:#ccccdc;-webkit-text-stroke:0.3px #ccccdc">0</div><div class="t" style="left:93px;top:1000.37px;width:120px;text-align:center;font-size:25px;color:#ccccdc;-webkit-text-stroke:0.3px #ccccdc">11:23:00</div><div class="t" style="left:266px;top:1000.37px;width:120px;text-align:center;font-size:25px;color:#ccccdc;-webkit-text-stroke:0.3px #ccccdc">11:24:00</div><div class="t" style="left:439px;top:1000.37px;width:120px;text-align:center;font-size:25px;color:#ccccdc;-webkit-text-stroke:0.3px #ccccdc">11:25:00</div><div class="t" style="left:612px;top:1000.37px;width:120px;text-align:center;font-size:25px;color:#ccccdc;-webkit-text-stroke:0.3px #ccccdc">11:26:00</div><div class="t" style="left:785px;top:1000.37px;width:120px;text-align:center;font-size:25px;color:#ccccdc;-webkit-text-stroke:0.3px #ccccdc">11:27:00</div><div class="legend" style="left:36.25px;top:1045.00px"><span class="li"><span class="sw" style="background:#B7DBAB"></span><span class="lt" style="letter-spacing:0px">prod/compactor</span></span><span class="li"><span class="sw" style="background:#6ED0E0"></span><span class="lt" style="letter-spacing:0px">prod/distributor</span></span><span class="li"><span class="sw" style="background:#82B5D8"></span><span class="lt" style="letter-spacing:0px">prod/ingester</span></span></div><div class="legend" style="left:36.25px;top:1092.00px"><span class="li"><span class="sw" style="background:#EAB839"></span><span class="lt" style="letter-spacing:0px">prod/querier</span></span><span class="li"><span class="sw" style="background:#B7DBAB"></span><span class="lt" style="letter-spacing:0px">prod/query-frontend</span></span></div><div class="panel" style="left:992px;top:752px;width:966px;height:400px"></div><div class="t " style="left:1010.25px;top:770.20px;font-size:28.5px;font-weight:400;color:#ccccdc;letter-spacing:1.0px;-webkit-text-stroke:0.6px #ccccdc;">container</div><svg class="i" style="left:1171.12px;top:770.37px" width="31.56" height="31.56" viewBox="0 0 24 24"><path fill="#8e8f99" d="M12,2A10,10,0,1,0,22,12,10,10,0,0,0,12,2Zm0,18a8,8,0,1,1,8-8A8,8,0,0,1,12,20Zm0-8.5a1,1,0,0,0-1,1v3a1,1,0,0,0,2,0v-3A1,1,0,0,0,12,11.5Zm0-4a1.25,1.25,0,1,0,1.25,1.25A1.25,1.25,0,0,0,12,7.5Z"/></svg><div class="b" style="left:1787px;top:762px;width:105px;height:48px;border-radius:4px;border:2px solid #79a6ff;"></div><div class="t" style="left:1787px;top:762px;width:105px;height:48px;line-height:48px;text-align:center;font-size:25px;color:#79a6ff;letter-spacing:0.6px;text-indent:0.6px;-webkit-text-stroke:0.6px #79a6ff">Select</div><div class="b" style="left:1929.10px;top:773.60px;width:5.8px;height:5.8px;border-radius:50%;background:#8e8f99"></div><div class="b" style="left:1929.10px;top:783.10px;width:5.8px;height:5.8px;border-radius:50%;background:#8e8f99"></div><div class="b" style="left:1929.10px;top:792.60px;width:5.8px;height:5.8px;border-radius:50%;background:#8e8f99"></div><svg class="i" style="left:0;top:0" width="2978" height="1476"><rect x="1061" y="869.0" width="863.5" height="1" fill="#303237"/><rect x="1061" y="908.0" width="863.5" height="1" fill="#303237"/><rect x="1061" y="947.0" width="863.5" height="1" fill="#303237"/><rect x="1061" y="986.0" width="863.5" height="1" fill="#303237"/><rect x="1136" y="850.5" width="1" height="143.5" fill="#303237"/><rect x="1309" y="850.5" width="1" height="143.5" fill="#303237"/><rect x="1482" y="850.5" width="1" height="143.5" fill="#303237"/><rect x="1655" y="850.5" width="1" height="143.5" fill="#303237"/><rect x="1828" y="850.5" width="1" height="143.5" fill="#303237"/><rect x="1710.00" y="928.00" width="2.00" height="58.50" fill="#F9E2D2"/><rect x="1714.00" y="980.65" width="2.00" height="5.85" fill="#F9E2D2"/><rect x="1717.00" y="939.70" width="2.00" height="46.80" fill="#64B0C8"/><rect x="1718.90" y="928.00" width="1.70" height="58.50" fill="#B7DBAB"/><rect x="1720.60" y="933.85" width="0.90" height="52.65" fill="#F9E2D2"/><rect x="1721.30" y="922.15" width="2.20" height="64.35" fill="#F9E2D2"/><rect x="1721.30" y="863.65" width="2.20" height="58.50" fill="#AEA2E0"/><rect x="1723.50" y="922.15" width="1.50" height="64.35" fill="#F9E2D2"/><rect x="1725.00" y="974.80" width="1.60" height="11.70" fill="#F9E2D2"/><rect x="1727.00" y="980.65" width="2" height="5.85" fill="#F9E2D2"/><rect x="1729.20" y="980.65" width="2" height="5.85" fill="#AEA2E0"/><rect x="1731.40" y="980.65" width="2" height="5.85" fill="#B7DBAB"/><rect x="1733.60" y="980.65" width="2" height="5.85" fill="#F9E2D2"/><rect x="1735.80" y="980.65" width="2" height="5.85" fill="#AEA2E0"/><rect x="1743.00" y="980.65" width="1.30" height="5.85" fill="#AEA2E0"/><rect x="1744.30" y="974.80" width="2.40" height="11.70" fill="#B7DBAB"/><rect x="1749.00" y="980.65" width="2.00" height="5.85" fill="#F9E2D2"/><rect x="1753.00" y="980.65" width="4.00" height="5.85" fill="#F9E2D2"/><rect x="1769.00" y="974.80" width="2.00" height="11.70" fill="#AEA2E0"/><rect x="1783.30" y="980.65" width="2.20" height="5.85" fill="#B7DBAB"/><rect x="1787.70" y="974.80" width="2.30" height="11.70" fill="#F9E2D2"/><rect x="1795.00" y="980.65" width="2.00" height="5.85" fill="#F9E2D2"/><rect x="1832.30" y="984.55" width="5.00" height="1.95" fill="#AEA2E0"/><rect x="1844.00" y="984.55" width="2.00" height="1.95" fill="#B7DBAB"/><rect x="1857.00" y="982.60" width="3.50" height="3.90" fill="#F9E2D2"/><rect x="1893.00" y="974.80" width="2.00" height="11.70" fill="#F9E2D2"/></svg><div class="t" style="left:1008px;top:852.62px;width:43px;text-align:right;font-size:25px;letter-spacing:2px;color:#ccccdc;-webkit-text-stroke:0.3px #ccccdc">60</div><div class="t" style="left:1008px;top:891.62px;width:43px;text-align:right;font-size:25px;letter-spacing:2px;color:#ccccdc;-webkit-text-stroke:0.3px #ccccdc">40</div><div class="t" style="left:1008px;top:930.62px;width:43px;text-align:right;font-size:25px;letter-spacing:2px;color:#ccccdc;-webkit-text-stroke:0.3px #ccccdc">20</div><div class="t" style="left:1008px;top:969.62px;width:43px;text-align:right;font-size:25px;letter-spacing:2px;color:#ccccdc;-webkit-text-stroke:0.3px #ccccdc">0</div><div class="t" style="left:1075px;top:1000.37px;width:120px;text-align:center;font-size:25px;color:#ccccdc;-webkit-text-stroke:0.3px #ccccdc">11:23:00</div><div class="t" style="left:1248px;top:1000.37px;width:120px;text-align:center;font-size:25px;color:#ccccdc;-webkit-text-stroke:0.3px #ccccdc">11:24:00</div><div class="t" style="left:1421px;top:1000.37px;width:120px;text-align:center;font-size:25px;color:#ccccdc;-webkit-text-stroke:0.3px #ccccdc">11:25:00</div><div class="t" style="left:1594px;top:1000.37px;width:120px;text-align:center;font-size:25px;color:#ccccdc;-webkit-text-stroke:0.3px #ccccdc">11:26:00</div><div class="t" style="left:1767px;top:1000.37px;width:120px;text-align:center;font-size:25px;color:#ccccdc;-webkit-text-stroke:0.3px #ccccdc">11:27:00</div><div class="legend" style="left:1018.25px;top:1045.00px"><span class="li"><span class="sw" style="background:#F9E2D2"></span><span class="lt" style="letter-spacing:0px">compactor</span></span><span class="li"><span class="sw" style="background:#B7DBAB"></span><span class="lt" style="letter-spacing:0px">distributor</span></span><span class="li"><span class="sw" style="background:#F9E2D2"></span><span class="lt" style="letter-spacing:0px">ingester</span></span><span class="li"><span class="sw" style="background:#AEA2E0"></span><span class="lt" style="letter-spacing:0px">querier</span></span></div><div class="legend" style="left:1018.25px;top:1092.00px"><span class="li"><span class="sw" style="background:#64B0C8"></span><span class="lt" style="letter-spacing:0px">query-frontend</span></span></div><div class="panel" style="left:1974px;top:752px;width:966px;height:400px"></div><div class="t " style="left:1992.25px;top:770.20px;font-size:28.5px;font-weight:400;color:#ccccdc;letter-spacing:1.0px;-webkit-text-stroke:0.6px #ccccdc;">app_kubernetes_io_name</div><svg class="i" style="left:2372.37px;top:770.37px" width="31.56" height="31.56" viewBox="0 0 24 24"><path fill="#8e8f99" d="M12,2A10,10,0,1,0,22,12,10,10,0,0,0,12,2Zm0,18a8,8,0,1,1,8-8A8,8,0,0,1,12,20Zm0-8.5a1,1,0,0,0-1,1v3a1,1,0,0,0,2,0v-3A1,1,0,0,0,12,11.5Zm0-4a1.25,1.25,0,1,0,1.25,1.25A1.25,1.25,0,0,0,12,7.5Z"/></svg><div class="b" style="left:2769px;top:762px;width:105px;height:48px;border-radius:4px;border:2px solid #79a6ff;"></div><div class="t" style="left:2769px;top:762px;width:105px;height:48px;line-height:48px;text-align:center;font-size:25px;color:#79a6ff;letter-spacing:0.6px;text-indent:0.6px;-webkit-text-stroke:0.6px #79a6ff">Select</div><div class="b" style="left:2911.10px;top:773.60px;width:5.8px;height:5.8px;border-radius:50%;background:#8e8f99"></div><div class="b" style="left:2911.10px;top:783.10px;width:5.8px;height:5.8px;border-radius:50%;background:#8e8f99"></div><div class="b" style="left:2911.10px;top:792.60px;width:5.8px;height:5.8px;border-radius:50%;background:#8e8f99"></div><svg class="i" style="left:0;top:0" width="2978" height="1476"><rect x="2043" y="875.0" width="863.5" height="1" fill="#303237"/><rect x="2043" y="926.0" width="863.5" height="1" fill="#303237"/><rect x="2043" y="977.0" width="863.5" height="1" fill="#303237"/><rect x="2043" y="1028.0" width="863.5" height="1" fill="#303237"/><rect x="2118" y="850.5" width="1" height="185.5" fill="#303237"/><rect x="2291" y="850.5" width="1" height="185.5" fill="#303237"/><rect x="2464" y="850.5" width="1" height="185.5" fill="#303237"/><rect x="2637" y="850.5" width="1" height="185.5" fill="#303237"/><rect x="2810" y="850.5" width="1" height="185.5" fill="#303237"/><rect x="2692.00" y="952.00" width="2.00" height="76.50" fill="#F29191"/><rect x="2696.00" y="1020.85" width="2.00" height="7.65" fill="#F29191"/><rect x="2699.00" y="967.30" width="2.00" height="61.20" fill="#F29191"/><rect x="2700.90" y="952.00" width="1.70" height="76.50" fill="#F29191"/><rect x="2702.60" y="959.65" width="0.90" height="68.85" fill="#F29191"/><rect x="2703.30" y="867.85" width="2.20" height="160.65" fill="#F29191"/><rect x="2705.50" y="944.35" width="1.50" height="84.15" fill="#F29191"/><rect x="2707.00" y="1013.20" width="1.60" height="15.30" fill="#F29191"/><rect x="2709.00" y="1020.85" width="11.00" height="7.65" fill="#F29191"/><rect x="2725.00" y="1020.85" width="1.30" height="7.65" fill="#F29191"/><rect x="2726.30" y="1013.20" width="2.40" height="15.30" fill="#F29191"/><rect x="2731.00" y="1020.85" width="2.00" height="7.65" fill="#F29191"/><rect x="2735.00" y="1020.85" width="4.00" height="7.65" fill="#F29191"/><rect x="2751.00" y="1013.20" width="2.00" height="15.30" fill="#F29191"/><rect x="2765.30" y="1020.85" width="2.20" height="7.65" fill="#F29191"/><rect x="2769.70" y="1013.20" width="2.30" height="15.30" fill="#F29191"/><rect x="2777.00" y="1020.85" width="2.00" height="7.65" fill="#F29191"/><rect x="2814.30" y="1025.95" width="5.00" height="2.55" fill="#F29191"/><rect x="2826.00" y="1025.95" width="2.00" height="2.55" fill="#F29191"/><rect x="2839.00" y="1023.40" width="3.50" height="5.10" fill="#F29191"/><rect x="2875.00" y="1013.20" width="2.00" height="15.30" fill="#F29191"/></svg><div class="t" style="left:1990px;top:858.62px;width:43px;text-align:right;font-size:25px;letter-spacing:2px;color:#ccccdc;-webkit-text-stroke:0.3px #ccccdc">60</div><div class="t" style="left:1990px;top:909.62px;width:43px;text-align:right;font-size:25px;letter-spacing:2px;color:#ccccdc;-webkit-text-stroke:0.3px #ccccdc">40</div><div class="t" style="left:1990px;top:960.62px;width:43px;text-align:right;font-size:25px;letter-spacing:2px;color:#ccccdc;-webkit-text-stroke:0.3px #ccccdc">20</div><div class="t" style="left:1990px;top:1011.62px;width:43px;text-align:right;font-size:25px;letter-spacing:2px;color:#ccccdc;-webkit-text-stroke:0.3px #ccccdc">0</div><div class="t" style="left:2057px;top:1042.12px;width:120px;text-align:center;font-size:25px;color:#ccccdc;-webkit-text-stroke:0.3px #ccccdc">11:23:00</div><div class="t" style="left:2230px;top:1042.12px;width:120px;text-align:center;font-size:25px;color:#ccccdc;-webkit-text-stroke:0.3px #ccccdc">11:24:00</div><div class="t" style="left:2403px;top:1042.12px;width:120px;text-align:center;font-size:25px;color:#ccccdc;-webkit-text-stroke:0.3px #ccccdc">11:25:00</div><div class="t" style="left:2576px;top:1042.12px;width:120px;text-align:center;font-size:25px;color:#ccccdc;-webkit-text-stroke:0.3px #ccccdc">11:26:00</div><div class="t" style="left:2749px;top:1042.12px;width:120px;text-align:center;font-size:25px;color:#ccccdc;-webkit-text-stroke:0.3px #ccccdc">11:27:00</div><div class="legend" style="left:2000.25px;top:1087.00px"><span class="li"><span class="sw" style="background:#F29191"></span><span class="lt" style="letter-spacing:0px">tempo</span></span></div><div class="panel" style="left:10px;top:1168px;width:966px;height:400px"></div><div class="t " style="left:28.25px;top:1186.20px;font-size:28.5px;font-weight:400;color:#ccccdc;letter-spacing:1.0px;-webkit-text-stroke:0.6px #ccccdc;">service_name</div><svg class="i" style="left:250.37px;top:1186.37px" width="31.56" height="31.56" viewBox="0 0 24 24"><path fill="#8e8f99" d="M12,2A10,10,0,1,0,22,12,10,10,0,0,0,12,2Zm0,18a8,8,0,1,1,8-8A8,8,0,0,1,12,20Zm0-8.5a1,1,0,0,0-1,1v3a1,1,0,0,0,2,0v-3A1,1,0,0,0,12,11.5Zm0-4a1.25,1.25,0,1,0,1.25,1.25A1.25,1.25,0,0,0,12,7.5Z"/></svg><svg class="i" style="left:749.35px;top:1186.35px" width="31.8" height="31.8" viewBox="0 0 24 24"><path fill="#808189" d="M19,2H5A3,3,0,0,0,2,5V6.17a3,3,0,0,0,.17,1v0a3.1,3.1,0,0,0,.59,1L9,15.22V21a1,1,0,0,0,.47.85A1,1,0,0,0,10,22a1,1,0,0,0,.45-.11l4-2A1,1,0,0,0,15,19V15.22l6.25-7A3.1,3.1,0,0,0,21.82,7.2v0A3,3,0,0,0,22,6.17V5A3,3,0,0,0,19,2ZM13.26,14.32A1,1,0,0,0,13,15v3.38l-2,1V15a1,1,0,0,0-.26-.68L5.24,8H18.76ZM20,6H4V5A1,1,0,0,1,5,4H19a1,1,0,0,1,1,1Z"/></svg><div class="b" style="left:805px;top:1178px;width:105px;height:48px;border-radius:4px;border:2px solid #79a6ff;"></div><div class="t" style="left:805px;top:1178px;width:105px;height:48px;line-height:48px;text-align:center;font-size:25px;color:#79a6ff;letter-spacing:0.6px;text-indent:0.6px;-webkit-text-stroke:0.6px #79a6ff">Select</div><div class="b" style="left:947.10px;top:1189.60px;width:5.8px;height:5.8px;border-radius:50%;background:#8e8f99"></div><div class="b" style="left:947.10px;top:1199.10px;width:5.8px;height:5.8px;border-radius:50%;background:#8e8f99"></div><div class="b" style="left:947.10px;top:1208.60px;width:5.8px;height:5.8px;border-radius:50%;background:#8e8f99"></div><svg class="i" style="left:0;top:0" width="2978" height="1476"><rect x="79" y="1291.0" width="863.5" height="1" fill="#303237"/><rect x="79" y="1342.0" width="863.5" height="1" fill="#303237"/><rect x="79" y="1393.0" width="863.5" height="1" fill="#303237"/><rect x="79" y="1444.0" width="863.5" height="1" fill="#303237"/><rect x="154" y="1266.5" width="1" height="185.5" fill="#303237"/><rect x="327" y="1266.5" width="1" height="185.5" fill="#303237"/><rect x="500" y="1266.5" width="1" height="185.5" fill="#303237"/><rect x="673" y="1266.5" width="1" height="185.5" fill="#303237"/><rect x="846" y="1266.5" width="1" height="185.5" fill="#303237"/><rect x="728.00" y="1368.00" width="2.00" height="76.50" fill="#F29191"/><rect x="732.00" y="1436.85" width="2.00" height="7.65" fill="#F29191"/><rect x="735.00" y="1383.30" width="2.00" height="61.20" fill="#F29191"/><rect x="736.90" y="1368.00" width="1.70" height="76.50" fill="#F29191"/><rect x="738.60" y="1375.65" width="0.90" height="68.85" fill="#F29191"/><rect x="739.30" y="1283.85" width="2.20" height="160.65" fill="#F29191"/><rect x="741.50" y="1360.35" width="1.50" height="84.15" fill="#F29191"/><rect x="743.00" y="1429.20" width="1.60" height="15.30" fill="#F29191"/><rect x="745.00" y="1436.85" width="11.00" height="7.65" fill="#F29191"/><rect x="761.00" y="1436.85" width="1.30" height="7.65" fill="#F29191"/><rect x="762.30" y="1429.20" width="2.40" height="15.30" fill="#F29191"/><rect x="767.00" y="1436.85" width="2.00" height="7.65" fill="#F29191"/><rect x="771.00" y="1436.85" width="4.00" height="7.65" fill="#F29191"/><rect x="787.00" y="1429.20" width="2.00" height="15.30" fill="#F29191"/><rect x="801.30" y="1436.85" width="2.20" height="7.65" fill="#F29191"/><rect x="805.70" y="1429.20" width="2.30" height="15.30" fill="#F29191"/><rect x="813.00" y="1436.85" width="2.00" height="7.65" fill="#F29191"/><rect x="850.30" y="1441.95" width="5.00" height="2.55" fill="#F29191"/><rect x="862.00" y="1441.95" width="2.00" height="2.55" fill="#F29191"/><rect x="875.00" y="1439.40" width="3.50" height="5.10" fill="#F29191"/><rect x="911.00" y="1429.20" width="2.00" height="15.30" fill="#F29191"/></svg><div class="t" style="left:26px;top:1274.62px;width:43px;text-align:right;font-size:25px;letter-spacing:2px;color:#ccccdc;-webkit-text-stroke:0.3px #ccccdc">60</div><div class="t" style="left:26px;top:1325.62px;width:43px;text-align:right;font-size:25px;letter-spacing:2px;color:#ccccdc;-webkit-text-stroke:0.3px #ccccdc">40</div><div class="t" style="left:26px;top:1376.62px;width:43px;text-align:right;font-size:25px;letter-spacing:2px;color:#ccccdc;-webkit-text-stroke:0.3px #ccccdc">20</div><div class="t" style="left:26px;top:1427.62px;width:43px;text-align:right;font-size:25px;letter-spacing:2px;color:#ccccdc;-webkit-text-stroke:0.3px #ccccdc">0</div><div class="t" style="left:93px;top:1458.12px;width:120px;text-align:center;font-size:25px;color:#ccccdc;-webkit-text-stroke:0.3px #ccccdc">11:23:00</div><div class="t" style="left:266px;top:1458.12px;width:120px;text-align:center;font-size:25px;color:#ccccdc;-webkit-text-stroke:0.3px #ccccdc">11:24:00</div><div class="t" style="left:439px;top:1458.12px;width:120px;text-align:center;font-size:25px;color:#ccccdc;-webkit-text-stroke:0.3px #ccccdc">11:25:00</div><div class="t" style="left:612px;top:1458.12px;width:120px;text-align:center;font-size:25px;color:#ccccdc;-webkit-text-stroke:0.3px #ccccdc">11:26:00</div><div class="t" style="left:785px;top:1458.12px;width:120px;text-align:center;font-size:25px;color:#ccccdc;-webkit-text-stroke:0.3px #ccccdc">11:27:00</div><div class="legend" style="left:36.25px;top:1503.00px"><span class="li"><span class="sw" style="background:#F29191"></span><span class="lt" style="letter-spacing:0px">tempo</span></span></div><div class="panel" style="left:992px;top:1168px;width:966px;height:400px"></div><div class="t " style="left:1010.25px;top:1186.20px;font-size:28.5px;font-weight:400;color:#ccccdc;letter-spacing:1.0px;-webkit-text-stroke:0.6px #ccccdc;">cluster</div><svg class="i" style="left:1136.37px;top:1186.37px" width="31.56" height="31.56" viewBox="0 0 24 24"><path fill="#8e8f99" d="M12,2A10,10,0,1,0,22,12,10,10,0,0,0,12,2Zm0,18a8,8,0,1,1,8-8A8,8,0,0,1,12,20Zm0-8.5a1,1,0,0,0-1,1v3a1,1,0,0,0,2,0v-3A1,1,0,0,0,12,11.5Zm0-4a1.25,1.25,0,1,0,1.25,1.25A1.25,1.25,0,0,0,12,7.5Z"/></svg><div class="b" style="left:1787px;top:1178px;width:105px;height:48px;border-radius:4px;border:2px solid #79a6ff;"></div><div class="t" style="left:1787px;top:1178px;width:105px;height:48px;line-height:48px;text-align:center;font-size:25px;color:#79a6ff;letter-spacing:0.6px;text-indent:0.6px;-webkit-text-stroke:0.6px #79a6ff">Select</div><div class="b" style="left:1929.10px;top:1189.60px;width:5.8px;height:5.8px;border-radius:50%;background:#8e8f99"></div><div class="b" style="left:1929.10px;top:1199.10px;width:5.8px;height:5.8px;border-radius:50%;background:#8e8f99"></div><div class="b" style="left:1929.10px;top:1208.60px;width:5.8px;height:5.8px;border-radius:50%;background:#8e8f99"></div><svg class="i" style="left:0;top:0" width="2978" height="1476"><rect x="1061" y="1291.0" width="863.5" height="1" fill="#303237"/><rect x="1061" y="1342.0" width="863.5" height="1" fill="#303237"/><rect x="1061" y="1393.0" width="863.5" height="1" fill="#303237"/><rect x="1061" y="1444.0" width="863.5" height="1" fill="#303237"/><rect x="1136" y="1266.5" width="1" height="185.5" fill="#303237"/><rect x="1309" y="1266.5" width="1" height="185.5" fill="#303237"/><rect x="1482" y="1266.5" width="1" height="185.5" fill="#303237"/><rect x="1655" y="1266.5" width="1" height="185.5" fill="#303237"/><rect x="1828" y="1266.5" width="1" height="185.5" fill="#303237"/><rect x="1710.00" y="1368.00" width="2.00" height="76.50" fill="#559a45"/><rect x="1714.00" y="1436.85" width="2.00" height="7.65" fill="#559a45"/><rect x="1717.00" y="1383.30" width="2.00" height="61.20" fill="#559a45"/><rect x="1718.90" y="1368.00" width="1.70" height="76.50" fill="#559a45"/><rect x="1720.60" y="1375.65" width="0.90" height="68.85" fill="#559a45"/><rect x="1721.30" y="1283.85" width="2.20" height="160.65" fill="#559a45"/><rect x="1723.50" y="1360.35" width="1.50" height="84.15" fill="#559a45"/><rect x="1725.00" y="1429.20" width="1.60" height="15.30" fill="#559a45"/><rect x="1727.00" y="1436.85" width="11.00" height="7.65" fill="#559a45"/><rect x="1743.00" y="1436.85" width="1.30" height="7.65" fill="#559a45"/><rect x="1744.30" y="1429.20" width="2.40" height="15.30" fill="#559a45"/><rect x="1749.00" y="1436.85" width="2.00" height="7.65" fill="#559a45"/><rect x="1753.00" y="1436.85" width="4.00" height="7.65" fill="#559a45"/><rect x="1769.00" y="1429.20" width="2.00" height="15.30" fill="#559a45"/><rect x="1783.30" y="1436.85" width="2.20" height="7.65" fill="#559a45"/><rect x="1787.70" y="1429.20" width="2.30" height="15.30" fill="#559a45"/><rect x="1795.00" y="1436.85" width="2.00" height="7.65" fill="#559a45"/><rect x="1832.30" y="1441.95" width="5.00" height="2.55" fill="#559a45"/><rect x="1844.00" y="1441.95" width="2.00" height="2.55" fill="#559a45"/><rect x="1857.00" y="1439.40" width="3.50" height="5.10" fill="#559a45"/><rect x="1893.00" y="1429.20" width="2.00" height="15.30" fill="#559a45"/></svg><div class="t" style="left:1008px;top:1274.62px;width:43px;text-align:right;font-size:25px;letter-spacing:2px;color:#ccccdc;-webkit-text-stroke:0.3px #ccccdc">60</div><div class="t" style="left:1008px;top:1325.62px;width:43px;text-align:right;font-size:25px;letter-spacing:2px;color:#ccccdc;-webkit-text-stroke:0.3px #ccccdc">40</div><div class="t" style="left:1008px;top:1376.62px;width:43px;text-align:right;font-size:25px;letter-spacing:2px;color:#ccccdc;-webkit-text-stroke:0.3px #ccccdc">20</div><div class="t" style="left:1008px;top:1427.62px;width:43px;text-align:right;font-size:25px;letter-spacing:2px;color:#ccccdc;-webkit-text-stroke:0.3px #ccccdc">0</div><div class="t" style="left:1075px;top:1458.12px;width:120px;text-align:center;font-size:25px;color:#ccccdc;-webkit-text-stroke:0.3px #ccccdc">11:23:00</div><div class="t" style="left:1248px;top:1458.12px;width:120px;text-align:center;font-size:25px;color:#ccccdc;-webkit-text-stroke:0.3px #ccccdc">11:24:00</div><div class="t" style="left:1421px;top:1458.12px;width:120px;text-align:center;font-size:25px;color:#ccccdc;-webkit-text-stroke:0.3px #ccccdc">11:25:00</div><div class="t" style="left:1594px;top:1458.12px;width:120px;text-align:center;font-size:25px;color:#ccccdc;-webkit-text-stroke:0.3px #ccccdc">11:26:00</div><div class="t" style="left:1767px;top:1458.12px;width:120px;text-align:center;font-size:25px;color:#ccccdc;-webkit-text-stroke:0.3px #ccccdc">11:27:00</div><div class="legend" style="left:1018.25px;top:1503.00px"><span class="li"><span class="sw" style="background:#559a45"></span><span class="lt" style="letter-spacing:0px">tempo</span></span></div><div class="panel" style="left:1974px;top:1168px;width:966px;height:400px"></div><div class="t " style="left:1992.25px;top:1186.20px;font-size:28.5px;font-weight:400;color:#ccccdc;letter-spacing:1.0px;-webkit-text-stroke:0.6px #ccccdc;">k8s_cluster_name</div><svg class="i" style="left:2270.12px;top:1186.37px" width="31.56" height="31.56" viewBox="0 0 24 24"><path fill="#8e8f99" d="M12,2A10,10,0,1,0,22,12,10,10,0,0,0,12,2Zm0,18a8,8,0,1,1,8-8A8,8,0,0,1,12,20Zm0-8.5a1,1,0,0,0-1,1v3a1,1,0,0,0,2,0v-3A1,1,0,0,0,12,11.5Zm0-4a1.25,1.25,0,1,0,1.25,1.25A1.25,1.25,0,0,0,12,7.5Z"/></svg><div class="b" style="left:2769px;top:1178px;width:105px;height:48px;border-radius:4px;border:2px solid #79a6ff;"></div><div class="t" style="left:2769px;top:1178px;width:105px;height:48px;line-height:48px;text-align:center;font-size:25px;color:#79a6ff;letter-spacing:0.6px;text-indent:0.6px;-webkit-text-stroke:0.6px #79a6ff">Select</div><div class="b" style="left:2911.10px;top:1189.60px;width:5.8px;height:5.8px;border-radius:50%;background:#8e8f99"></div><div class="b" style="left:2911.10px;top:1199.10px;width:5.8px;height:5.8px;border-radius:50%;background:#8e8f99"></div><div class="b" style="left:2911.10px;top:1208.60px;width:5.8px;height:5.8px;border-radius:50%;background:#8e8f99"></div><svg class="i" style="left:0;top:0" width="2978" height="1476"><rect x="2043" y="1291.0" width="863.5" height="1" fill="#303237"/><rect x="2043" y="1342.0" width="863.5" height="1" fill="#303237"/><rect x="2043" y="1393.0" width="863.5" height="1" fill="#303237"/><rect x="2043" y="1444.0" width="863.5" height="1" fill="#303237"/><rect x="2118" y="1266.5" width="1" height="185.5" fill="#303237"/><rect x="2291" y="1266.5" width="1" height="185.5" fill="#303237"/><rect x="2464" y="1266.5" width="1" height="185.5" fill="#303237"/><rect x="2637" y="1266.5" width="1" height="185.5" fill="#303237"/><rect x="2810" y="1266.5" width="1" height="185.5" fill="#303237"/><rect x="2692.00" y="1368.00" width="2.00" height="76.50" fill="#559a45"/><rect x="2696.00" y="1436.85" width="2.00" height="7.65" fill="#559a45"/><rect x="2699.00" y="1383.30" width="2.00" height="61.20" fill="#559a45"/><rect x="2700.90" y="1368.00" width="1.70" height="76.50" fill="#559a45"/><rect x="2702.60" y="1375.65" width="0.90" height="68.85" fill="#559a45"/><rect x="2703.30" y="1283.85" width="2.20" height="160.65" fill="#559a45"/><rect x="2705.50" y="1360.35" width="1.50" height="84.15" fill="#559a45"/><rect x="2707.00" y="1429.20" width="1.60" height="15.30" fill="#559a45"/><rect x="2709.00" y="1436.85" width="11.00" height="7.65" fill="#559a45"/><rect x="2725.00" y="1436.85" width="1.30" height="7.65" fill="#559a45"/><rect x="2726.30" y="1429.20" width="2.40" height="15.30" fill="#559a45"/><rect x="2731.00" y="1436.85" width="2.00" height="7.65" fill="#559a45"/><rect x="2735.00" y="1436.85" width="4.00" height="7.65" fill="#559a45"/><rect x="2751.00" y="1429.20" width="2.00" height="15.30" fill="#559a45"/><rect x="2765.30" y="1436.85" width="2.20" height="7.65" fill="#559a45"/><rect x="2769.70" y="1429.20" width="2.30" height="15.30" fill="#559a45"/><rect x="2777.00" y="1436.85" width="2.00" height="7.65" fill="#559a45"/><rect x="2814.30" y="1441.95" width="5.00" height="2.55" fill="#559a45"/><rect x="2826.00" y="1441.95" width="2.00" height="2.55" fill="#559a45"/><rect x="2839.00" y="1439.40" width="3.50" height="5.10" fill="#559a45"/><rect x="2875.00" y="1429.20" width="2.00" height="15.30" fill="#559a45"/></svg><div class="t" style="left:1990px;top:1274.62px;width:43px;text-align:right;font-size:25px;letter-spacing:2px;color:#ccccdc;-webkit-text-stroke:0.3px #ccccdc">60</div><div class="t" style="left:1990px;top:1325.62px;width:43px;text-align:right;font-size:25px;letter-spacing:2px;color:#ccccdc;-webkit-text-stroke:0.3px #ccccdc">40</div><div class="t" style="left:1990px;top:1376.62px;width:43px;text-align:right;font-size:25px;letter-spacing:2px;color:#ccccdc;-webkit-text-stroke:0.3px #ccccdc">20</div><div class="t" style="left:1990px;top:1427.62px;width:43px;text-align:right;font-size:25px;letter-spacing:2px;color:#ccccdc;-webkit-text-stroke:0.3px #ccccdc">0</div><div class="t" style="left:2057px;top:1458.12px;width:120px;text-align:center;font-size:25px;color:#ccccdc;-webkit-text-stroke:0.3px #ccccdc">11:23:00</div><div class="t" style="left:2230px;top:1458.12px;width:120px;text-align:center;font-size:25px;color:#ccccdc;-webkit-text-stroke:0.3px #ccccdc">11:24:00</div><div class="t" style="left:2403px;top:1458.12px;width:120px;text-align:center;font-size:25px;color:#ccccdc;-webkit-text-stroke:0.3px #ccccdc">11:25:00</div><div class="t" style="left:2576px;top:1458.12px;width:120px;text-align:center;font-size:25px;color:#ccccdc;-webkit-text-stroke:0.3px #ccccdc">11:26:00</div><div class="t" style="left:2749px;top:1458.12px;width:120px;text-align:center;font-size:25px;color:#ccccdc;-webkit-text-stroke:0.3px #ccccdc">11:27:00</div><div class="legend" style="left:2000.25px;top:1503.00px"><span class="li"><span class="sw" style="background:#559a45"></span><span class="lt" style="letter-spacing:0px">tempo</span></span></div>
</div>
<div class="scroll"></div>
</body></html>
